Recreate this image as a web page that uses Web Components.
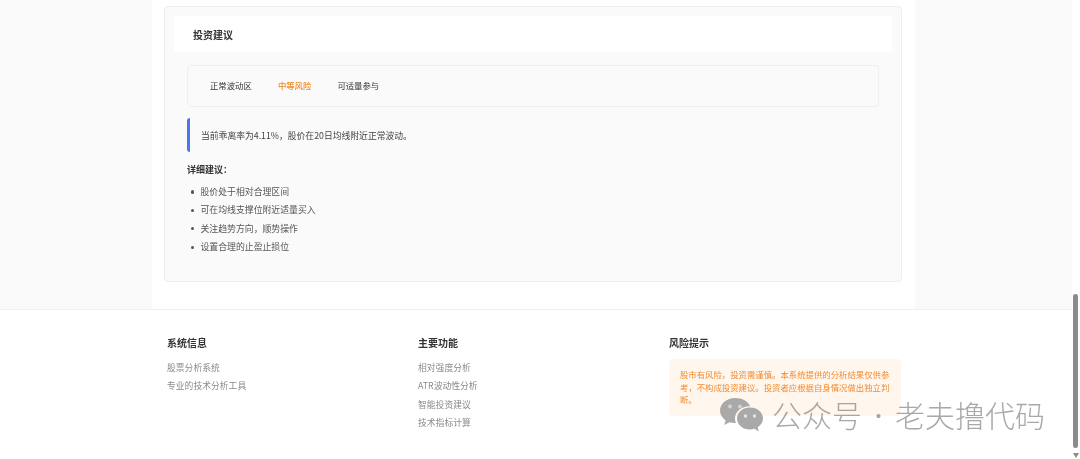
<!DOCTYPE html>
<html lang="zh-CN"><head><meta charset="utf-8"><title>投资建议</title>
<style>
html,body{margin:0;height:459px;overflow:hidden;background:#fff}
body{font-family:"Noto Sans CJK SC","Noto Sans",sans-serif;color:#333}
</style></head><body>
<app-shell>
  <report-main>
    <advice-card heading="投资建议">
      <signal-row>
        <span>正常波动区</span><span class="risk">中等风险</span><span>可适量参与</span>
      </signal-row>
      <note-box>当前乖离率为4.11%，股价在20日均线附近正常波动。</note-box>
      <detail-list heading="详细建议：">
        <li>股价处于相对合理区间</li>
        <li>可在均线支撑位附近适量买入</li>
        <li>关注趋势方向，顺势操作</li>
        <li>设置合理的止盈止损位</li>
      </detail-list>
    </advice-card>
  </report-main>
  <site-footer>
    <footer-col heading="系统信息"><p>股票分析系统</p><p>专业的技术分析工具</p></footer-col>
    <footer-col heading="主要功能"><p>相对强度分析</p><p>ATR波动性分析</p><p>智能投资建议</p><p>技术指标计算</p></footer-col>
    <footer-col heading="风险提示"><risk-note>股市有风险，投资需谨慎。本系统提供的分析结果仅供参考，不构成投资建议。投资者应根据自身情况做出独立判断。</risk-note></footer-col>
  </site-footer>
</app-shell>
<script>
function def(name, css, html){
  customElements.define(name, class extends HTMLElement{
    constructor(){super();const r=this.attachShadow({mode:'open'});
      r.innerHTML='<style>'+css+'</style>'+html;}
    connectedCallback(){
      const h=this.shadowRoot.querySelector('[data-h]');
      if(h)h.textContent=this.getAttribute('heading')||'';
    }
  });
}
def('app-shell',`
:host{display:grid;grid-template-columns:1fr 8px;height:459px;overflow:hidden;position:relative}
.page{display:flex;flex-direction:column;min-width:0;filter:blur(.25px)}
.bar{display:flex;flex-direction:column;align-items:flex-start;padding:294px 0 0 1px;background:#fff}
.thumb{width:5px;height:154px;border-radius:3px;background:#8b8b8b}
.arrow{width:0;height:0;margin:5px 0 0 0;border-left:3px solid transparent;border-right:3px solid transparent;border-top:5px solid #8b8b8b}
.wm{position:absolute;left:720px;top:396px;display:flex;align-items:center;pointer-events:none;
 font:300 30px/36px "Noto Sans CJK SC",sans-serif;color:rgba(110,110,110,.6);white-space:nowrap;filter:blur(.4px)}
.wm svg{width:43px;height:34px;display:block;margin:2px 9px 0 0}
.dot{width:33px;text-align:center;font-size:22px}
`,`<div class="page"><slot></slot></div><div class="bar"><div class="thumb"></div><div class="arrow"></div></div>
<div class="wm"><svg viewBox="0 0 43 34"><path fill="#a9a9a9" d="M15 0C6.700 0 0 5.600 0 12.600c0 4 2.200 7.500 5.600 9.800L4.200 27l5.200-2.700c1.800.5 3.600.8 5.600.8h1C15.300 23.700 15 22.200 15 20.700 15 13.700 21.500 8.300 29.500 8.300h.6C28.300 3.500 22.200 0 15 0z"/><path fill="#a9a9a9" d="M30 9.500c-7.200 0-13 4.900-13 11s5.800 11 13 11c1.600 0 3.100-.2 4.500-.7l4.200 2.700-1-4.200c3.100-2 5.300-5.200 5.300-8.800 0-6.100-5.800-11-13-11z"/><circle cx="10" cy="8.500" r="1.900" fill="#d4d4d4"/><circle cx="20" cy="8.500" r="1.900" fill="#d4d4d4"/><circle cx="25.500" cy="18" r="1.700" fill="#e6e6e6"/><circle cx="34.500" cy="18" r="1.700" fill="#e6e6e6"/></svg><span>公众号</span><span class="dot">·</span><span>老夫撸代码</span></div>`);
def('report-main',`
:host{display:block;background:#fafafa;padding:0 157px 0 152px;height:309px;box-sizing:border-box;flex:none}
.in{background:#fff;height:100%;padding:6px 13px 0 12px;box-sizing:border-box}
`,`<div class="in"><slot></slot></div>`);
def('advice-card',`
:host{display:block;background:#fafafa;border:1px solid #eeeeee;border-radius:4px;height:276px;box-sizing:border-box;padding:9px 9px 0}
.hd{background:#fff;height:36px;display:flex;align-items:center;padding-left:19px;font-size:10px;font-weight:700;color:#333;border-radius:2px}
.bd{padding:13px 13px 0}
`,`<div class="hd" data-h></div><div class="bd"><slot></slot></div>`);
def('signal-row',`
:host{display:flex;align-items:center;gap:26px;height:42px;box-sizing:border-box;padding:0 22px 2px;border:1px solid #f0f0f0;border-radius:4px;background:#fafafa;font-size:8.4px;color:#333}
::slotted(.risk){color:#f08a24;font-weight:500}
`,`<slot></slot>`);
def('note-box',`
:host{display:flex;align-items:center;height:34px;margin-top:11px;padding-left:11px;border-left:3px solid #4a76e8;border-radius:3px;font-size:8.8px;color:#444}
`,`<slot></slot>`);
def('detail-list',`
:host{display:block;margin-top:10px}
h4{margin:0 0 5px;font-size:9px;line-height:16px;font-weight:700;color:#333}
ul{margin:0;padding:0 0 0 13.500px;font-size:8.87px;color:#555;list-style:none}
::slotted(li){line-height:18.4px}
::slotted(li)::before{content:"";display:inline-block;width:3.200px;height:3.200px;border-radius:50%;background:#555;margin-left:-9.300px;margin-right:6.100px;vertical-align:1.500px}
`,`<h4 data-h></h4><ul><slot></slot></ul>`);
def('site-footer',`
:host{display:grid;grid-template-columns:232px 232px 232px;column-gap:19px;padding:24px 0 0 167px;border-top:1px solid #f0f0f0;background:#fff;flex:1}
`,`<slot></slot>`);
def('footer-col',`
:host{display:block}
h4{margin:0 0 8px;font-size:10px;line-height:17px;font-weight:700;color:#333}
::slotted(p){margin:0;font-size:8.8px;line-height:18.4px;color:#8a8a8a}
`,`<h4 data-h></h4><slot></slot>`);
def('risk-note',`
:host{display:block;background:#fff6ee;border-radius:4px;padding:9px 9px 9px 11px;box-sizing:border-box;height:57px;margin-top:1px;font-size:8.4px;line-height:12.700px;color:#f28b2f}
`,`<slot></slot>`);
</script>
</body></html>
